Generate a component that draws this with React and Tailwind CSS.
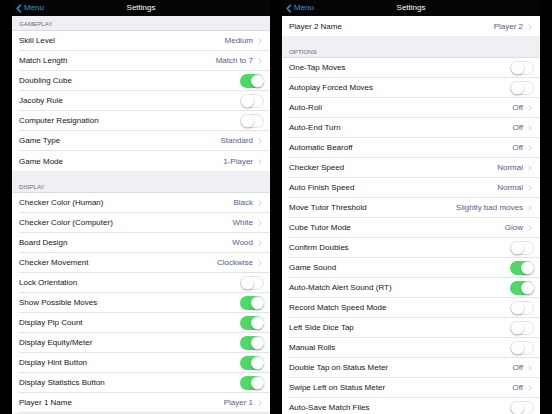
import React from 'react';

const left = [
  { header: 'GAMEPLAY', first: true },
  { label: 'Skill Level', value: 'Medium' },
  { label: 'Match Length', value: 'Match to 7' },
  { label: 'Doubling Cube', on: true },
  { label: 'Jacoby Rule', on: false },
  { label: 'Computer Resignation', on: false },
  { label: 'Game Type', value: 'Standard' },
  { label: 'Game Mode', value: '1-Player', last: true },
  { header: 'DISPLAY' },
  { label: 'Checker Color (Human)', value: 'Black' },
  { label: 'Checker Color (Computer)', value: 'White' },
  { label: 'Board Design', value: 'Wood' },
  { label: 'Checker Movement', value: 'Clockwise' },
  { label: 'Lock Orientation', on: false },
  { label: 'Show Possible Moves', on: true },
  { label: 'Display Pip Count', on: true },
  { label: 'Display Equity/Meter', on: true },
  { label: 'Display Hint Button', on: true },
  { label: 'Display Statistics Button', on: true },
  { label: 'Player 1 Name', value: 'Player 1' },
];

const right = [
  { label: 'Player 2 Name', value: 'Player 2', last: true },
  { header: 'OPTIONS' },
  { label: 'One-Tap Moves', on: false },
  { label: 'Autoplay Forced Moves', on: false },
  { label: 'Auto-Roll', value: 'Off' },
  { label: 'Auto-End Turn', value: 'Off' },
  { label: 'Automatic Bearoff', value: 'Off' },
  { label: 'Checker Speed', value: 'Normal' },
  { label: 'Auto Finish Speed', value: 'Normal' },
  { label: 'Move Tutor Threshold', value: 'Slightly bad moves' },
  { label: 'Cube Tutor Mode', value: 'Glow' },
  { label: 'Confirm Doubles', on: false },
  { label: 'Game Sound', on: true },
  { label: 'Auto-Match Alert Sound (RT)', on: true },
  { label: 'Record Match Speed Mode', on: false },
  { label: 'Left Side Dice Tap', on: false },
  { label: 'Manual Rolls', on: false },
  { label: 'Double Tap on Status Meter', value: 'Off' },
  { label: 'Swipe Left on Status Meter', value: 'Off' },
  { label: 'Auto-Save Match Files', on: false },
];

function Toggle({ on }) {
  return (
    <div
      className={`relative w-[24px] h-[14px] rounded-full shrink-0 ${
        on ? 'bg-[#4cd964]' : 'bg-white border border-[#e3e3e6]'
      }`}
    >
      <div
        className={`absolute top-1/2 -translate-y-1/2 w-[13px] h-[13px] rounded-full bg-white shadow-[0_1px_2px_rgba(0,0,0,0.3)] ${
          on ? 'right-[0.5px]' : 'left-[-0.5px]'
        }`}
      />
    </div>
  );
}

function Chevron() {
  return (
    <svg width="4" height="6" viewBox="0 0 4 6" className="ml-[5px] shrink-0">
      <path d="M0.6 0.6 L3.2 3 L0.6 5.4" fill="none" stroke="#c7c7cc" strokeWidth="0.9" />
    </svg>
  );
}

function Row({ item }) {
  return (
    <div className="h-[20px] bg-white pl-[7px] shrink-0">
      <div
        className={`h-full flex items-center justify-between pr-[6px] pt-[1px] ${
          item.last ? '' : 'border-b border-[#e4e4e7]'
        }`}
      >
        <span className="text-[8px] text-[#151515]">{item.label}</span>
        {item.value !== undefined ? (
          <span className="flex items-center pr-[2px]">
            <span className="text-[8px] text-[#52618d]">{item.value}</span>
            <Chevron />
          </span>
        ) : (
          <Toggle on={item.on} />
        )}
      </div>
    </div>
  );
}

function Header({ item }) {
  return (
    <div
      className={`shrink-0 flex items-end pl-[7px] text-[6.2px] text-[#6d6d72] ${
        item.first ? 'h-[15px] pb-[2px]' : 'h-[22px] pb-[1px]'
      } border-b border-[#dcdce0]`}
    >
      {item.header}
    </div>
  );
}

function Panel({ items }) {
  return (
    <div className="w-[258px] h-full bg-[#efeff4] flex flex-col overflow-hidden">
      <div className="h-[16px] bg-[#050505] flex items-center justify-center relative shrink-0">
        <div className="absolute left-[4px] top-0 h-full flex items-center text-[8px] text-[#2a9fd8]">
          <svg width="6" height="9" viewBox="0 0 6 9" className="mr-[2px]">
            <path d="M4.8 0.8 L1.2 4.5 L4.8 8.2" fill="none" stroke="#2a9fd8" strokeWidth="1.4" />
          </svg>
          Menu
        </div>
        <span className="text-[8px] text-white">Settings</span>
      </div>
      {items.map((it, i) =>
        it.header ? <Header key={i} item={it} /> : <Row key={i} item={it} />
      )}
    </div>
  );
}

export default function App() {
  return (
    <div
      className="w-[552px] h-[414px] bg-black flex gap-[12px] px-[12px] overflow-hidden"
      style={{ fontFamily: '"Liberation Sans", Arial, sans-serif' }}
    >
      <Panel items={left} />
      <Panel items={right} />
    </div>
  );
}
